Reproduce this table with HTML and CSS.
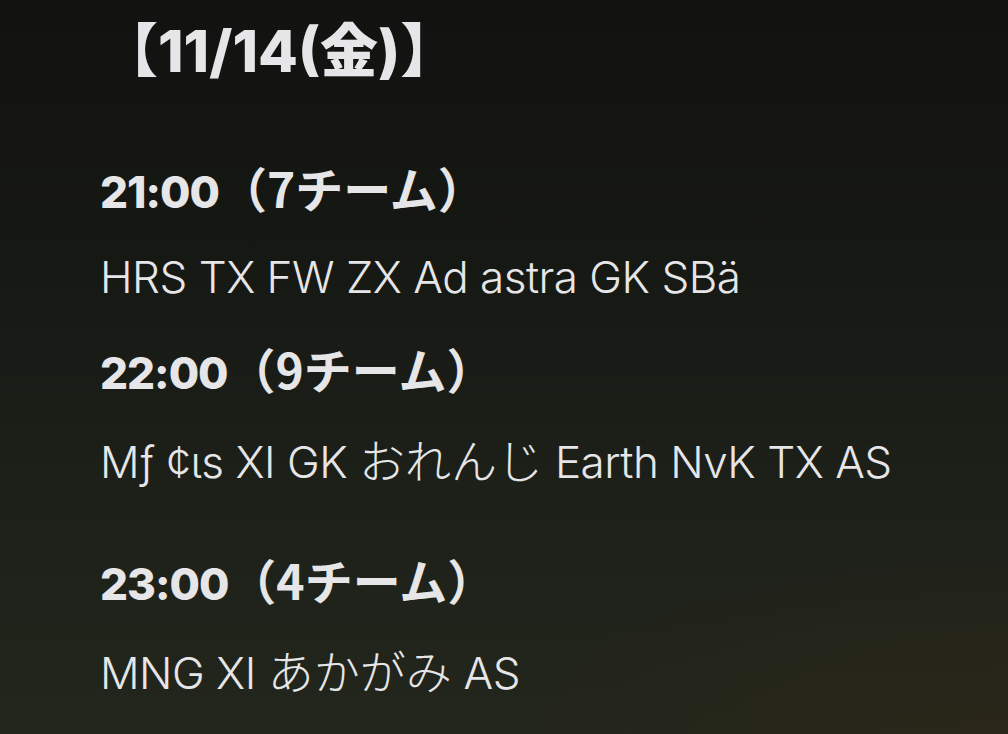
FILE: index.html
```html
<!DOCTYPE html>
<html lang="ja">
<head>
<meta charset="utf-8">
<link rel="stylesheet" href="styles.css">
</head>
<body>
<main class="page">
  <h1 class="date">【11/14(金)】</h1>
  <section class="slot slot-first">
    <h2 class="time">21:00<span class="count">（7チーム）</span></h2>
    <p class="teams">HRS TX FW ZX Ad astra GK SBä</p>
  </section>
  <section class="slot slot-second">
    <h2 class="time">22:00<span class="count">（9チーム）</span></h2>
    <p class="teams">Mƒ ¢ιs XI GK <span class="kana">おれんじ</span> Earth NvK TX AS</p>
  </section>
  <section class="slot slot-third">
    <h2 class="time">23:00<span class="count">（4チーム）</span></h2>
    <p class="teams">MNG XI <span class="kana">あかがみ</span> AS</p>
  </section>
</main>
</body>
</html>
```

FILE: styles.css
```css
html, body {
  margin: 0;
  padding: 0;
  width: 1008px;
  height: 734px;
  overflow: hidden;
}
body {
  background:
    radial-gradient(ellipse 700px 260px at 100% 100%, rgba(48, 40, 24, 0.55), rgba(48, 40, 24, 0) 70%),
    linear-gradient(180deg, #121310 0%, #161814 35%, #1d2019 65%, #23261c 100%);
  color: #e6e6e8;
  font-family: "Noto Sans CJK JP", "Noto Sans", sans-serif;
}
.page {
  padding: 11px 0 0 100px;
  display: flex;
  flex-direction: column;
}
.date {
  margin: 0;
  height: 80px;
  font-family: "Inter", "Noto Sans CJK JP", sans-serif;
  font-size: 58px;
  line-height: 80px;
  font-weight: 800;
  letter-spacing: 0;
  white-space: nowrap;
}
.slot {
  display: flex;
  flex-direction: column;
}
.slot-first { margin-top: 52px; }
.slot-second { margin-top: 3px; }
.slot-third { margin-top: 33px; }
.time {
  margin: 0;
  height: 88px;
  font-family: "Inter", "Noto Sans CJK JP", sans-serif;
  font-size: 44px;
  line-height: 88px;
  font-weight: 800;
  letter-spacing: -1px;
  white-space: nowrap;
}
.count {
  font-family: "Noto Sans CJK JP", sans-serif;
  font-size: 48px;
  font-weight: 700;
  letter-spacing: 0;
}
.teams {
  margin: 2px 0 0;
  height: 88px;
  font-family: "Inter", "Noto Sans CJK JP", sans-serif;
  font-size: 44px;
  line-height: 88px;
  font-weight: 300;
  letter-spacing: -0.5px;
  white-space: nowrap;
}
.kana {
  font-family: "Noto Sans CJK JP", sans-serif;
  font-size: 46px;
  letter-spacing: 0;
}
```
